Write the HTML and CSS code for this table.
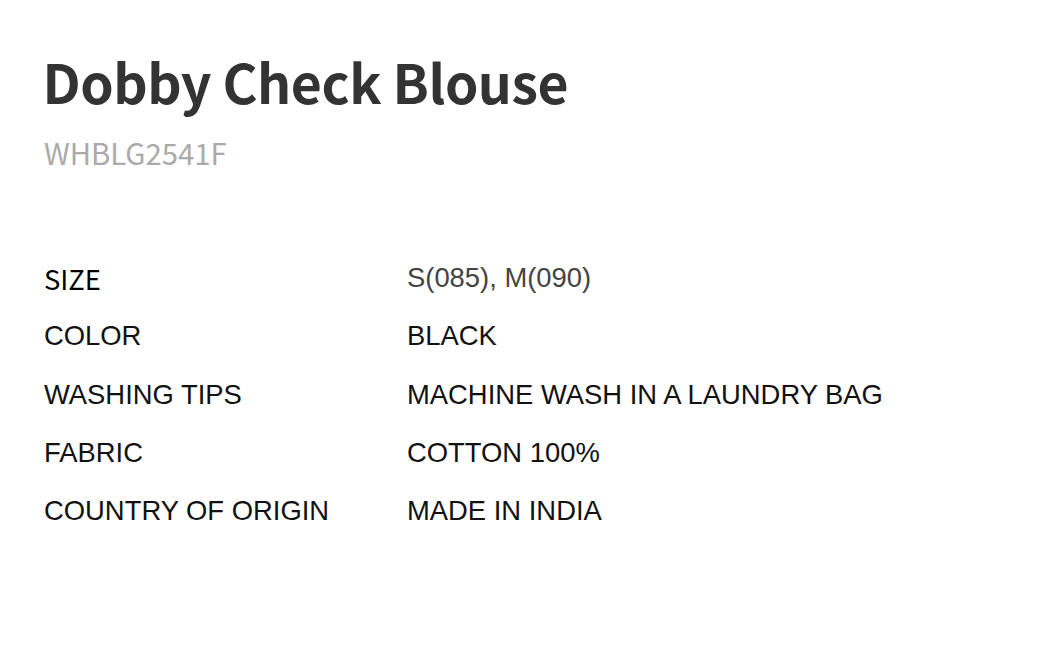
FILE: index.html
```html
<!DOCTYPE html>
<html>
<head>
<meta charset="utf-8">
<link rel="stylesheet" href="styles.css">
</head>
<body>
<div class="product">
  <h1 class="title">Dobby Check Blouse</h1>
  <div class="sku">WHBLG2541F</div>
  <div class="specs">
    <div class="row"><div class="label label-size">SIZE</div><div class="value value-size">S(085), M(090)</div></div>
    <div class="row"><div class="label">COLOR</div><div class="value">BLACK</div></div>
    <div class="row"><div class="label">WASHING TIPS</div><div class="value">MACHINE WASH IN A LAUNDRY BAG</div></div>
    <div class="row"><div class="label">FABRIC</div><div class="value">COTTON 100%</div></div>
    <div class="row"><div class="label">COUNTRY OF ORIGIN</div><div class="value">MADE IN INDIA</div></div>
  </div>
</div>
</body>
</html>
```
FILE: styles.css
```css
html, body {
  margin: 0;
  padding: 0;
  background: #fff;
}
.product {
  padding: 45px 0 0 44px;
}
.title {
  margin: 0 0 0 -1.5px;
  font-family: "Noto Sans CJK KR", "Noto Sans", sans-serif;
  font-weight: 700;
  font-size: 53.5px;
  line-height: 72px;
  color: #333;
  letter-spacing: -0.5px;
}
.sku {
  margin-top: 15px;
  font-family: "Noto Sans CJK KR", "Noto Sans", sans-serif;
  font-size: 29.3px;
  line-height: 40px;
  color: #aaa;
}
.specs {
  margin-top: 91px;
  display: flex;
  flex-direction: column;
}
.row {
  display: grid;
  grid-template-columns: 363px 1fr;
  height: 58.3px;
  align-items: start;
}
.label, .value {
  font-family: "Liberation Sans", Arial, sans-serif;
  font-size: 27.4px;
  line-height: 30px;
  color: #111;
}
.label-size {
  font-family: "Noto Sans CJK KR", "Noto Sans", sans-serif;
  font-weight: 400;
  font-size: 27.4px;
  color: #000;
}
.value-size {
  color: #444;
}
```
